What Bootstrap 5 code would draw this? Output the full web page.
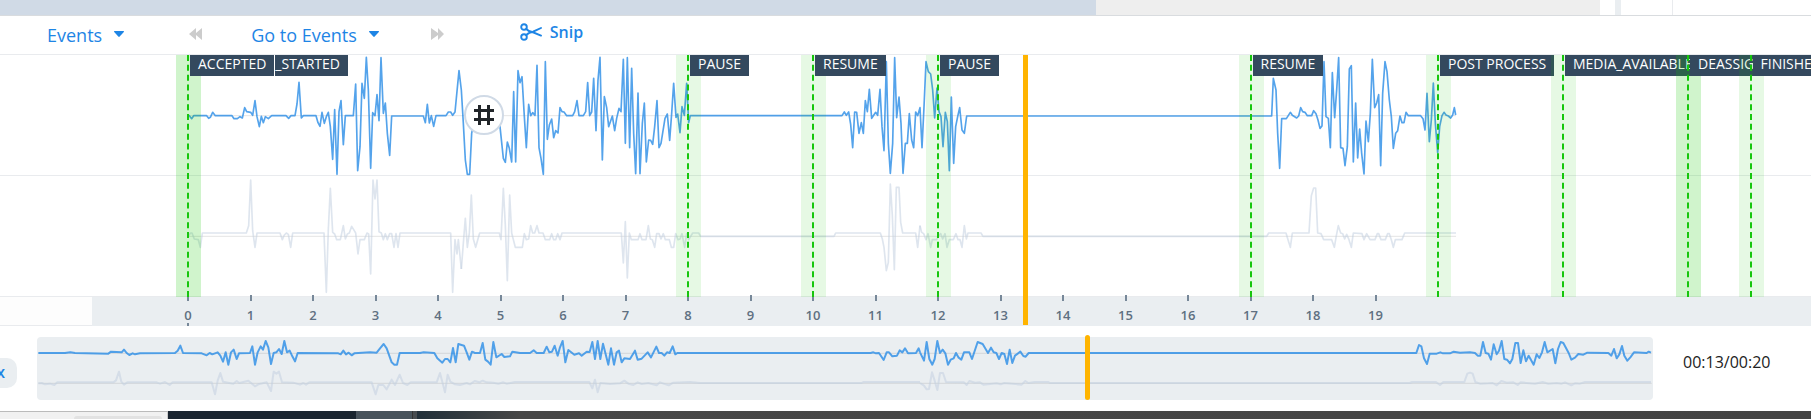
<!DOCTYPE html>
<html lang="en">
<head>
<meta charset="utf-8">
<meta name="viewport" content="width=device-width, initial-scale=1">
<title>Call timeline</title>
<link href="https://cdn.jsdelivr.net/npm/bootstrap@5.3.0/dist/css/bootstrap.min.css" rel="stylesheet">
<script src="https://cdn.jsdelivr.net/npm/bootstrap@5.3.0/dist/js/bootstrap.bundle.min.js" defer></script>
<style>
  :root { --blue: #1e85e5; --line: #e9ebee; --fill: #eaeef1; --navy: #34495e; --amber: #ffb400; }
  body { font-family: "Open Sans", "Noto Sans", sans-serif; background: #fff; overflow: hidden; }
  .load-strip { height: 16px; border-bottom: 1px solid #d9dcdf; }
  .load-strip .done { flex: 0 0 1096px; background: #d0dae6; }
  .load-strip .rest { flex: 0 1 504px; background: #eee; }
  .load-strip .grip { width: 6px; margin-left: 15px; background: var(--fill); }
  .load-strip .edge { width: 1px; margin-left: 51px; background: var(--line); }
  .tools { height: 39px; padding-left: 47px; border-bottom: 1px solid var(--line); }
  .tool { border: 0; padding: 0; background: none; color: var(--blue); font-size: 18px; line-height: 38px; white-space: nowrap; }
  .tool-caret { width: 10px; height: 6px; margin: 0 0 2px 12px; fill: var(--blue); }
  .tool-step { width: 14px; height: 12px; fill: #ccc; }
  .step-back { height: 36px; margin: 0 48px 0 65px; }
  .step-next { height: 36px; margin: 0 75px 0 52px; }
  .tool-snip { font-size: 16px; font-weight: 600; line-height: 32px; }
  .tool-snip svg { width: 22px; height: 18px; }
  .timeline { overflow: hidden; }
  .lane { height: 121px; border-bottom: 1px solid var(--line); }
  .wave { display: block; width: 1460px; height: 120px; overflow: visible; }
  .wave polyline, .mini polyline { fill: none; stroke-linejoin: round; }
  .wave polyline { stroke-width: 5; }
  .mini polyline { stroke-width: 2px; vector-effect: non-scaling-stroke; }
  .agent polyline { stroke: #2e8fe6; stroke-opacity: .82; }
  .client polyline { stroke: #c3cfe0; stroke-opacity: .55; }
  .wave polyline.axis { stroke: #999; stroke-opacity: .25; stroke-width: 3; }
  .mini polyline.axis { stroke: #999; stroke-opacity: .25; stroke-width: 1px; }
  .at { position: absolute; top: 0; left: calc(188px + var(--t) * 125px / 2); }
  .event { height: 242px; }
  .event .zone { position: absolute; top: 0; bottom: 0; left: -12px; width: 25px; background: rgba(20, 200, 0, .105); }
  .event .zone.double { background: rgba(20, 200, 0, .2); }
  .event .dash { position: absolute; top: 0; bottom: 0; left: -1px; border-left: 2px dashed #16c60c; }
  .event .tags { position: absolute; top: 0; left: 2px; }
  .tag { background: var(--navy); color: #fff; font-size: 14px; line-height: 18px; height: 21px; padding: 0 8px; white-space: nowrap; }
  .tag + .tag { border-left: 1px solid #fff; padding-left: 0; }
  .playhead { width: 5px; height: 270px; margin-left: -3px; background: var(--amber); }
  .hash { position: absolute; left: 464px; top: 40px; width: 40px; height: 40px; border: 2px solid #d0dae6; border-radius: 50%; background: #fff; padding: 0; }
  .ruler { height: 29px; background: var(--fill); color: #5f7081; font-size: 13px; font-weight: 600; }
  .ruler .head { width: 92px; height: 29px; background: #fdfdfd; border-bottom: 1px solid var(--line); }
  .tick { width: 40px; margin-left: -20px; text-align: center; line-height: 18px; padding-top: 9px; }
  .tick::before { content: ""; position: absolute; left: 19px; top: -2px; width: 2px; height: 6px; background: #778899; }
  .tick.origin::after { content: ""; position: absolute; left: 19px; top: 26px; width: 2px; height: 3px; background: #778899; }
  .bottom-bar { padding: 11px 39px 11px 0; }
  .speed { width: 17px; height: 30px; border: 0; padding: 0 12px 2px 0; border-radius: 0 10px 10px 0; background: var(--fill); color: var(--blue); font-size: 16px; font-weight: 600; direction: rtl; overflow: hidden; margin-top: 8px; }
  .overview { height: 63px; margin: 0 30px 0 20px; border-radius: 4px; background: var(--fill); min-width: 0; }
  .mini { display: block; width: 100%; height: 63px; }
  .overview-head { position: absolute; left: 65%; top: -2px; width: 5px; height: 65px; margin-left: -2px; border-radius: 3px; background: var(--amber); }
  .clock { width: 89px; font-size: 16px; line-height: 24px; color: #222; margin-top: -13px; }
  .desk { height: 8px; background: linear-gradient(90deg, #22303a 417px, #474747 520px, #444 100%); }
  .desk .tab { width: 168px; background: #f1f1f1; border-top: 1px solid #bbb; border-right: 1px solid #ccc; padding: 4px 5px 0 0; }
  .desk .pill { width: 88px; height: 3px; border-radius: 6px 6px 0 0; background: #e2e2e2; }
  .desk .dark { width: 188px; background: #1a2530; }
  .desk .slate { width: 56px; background: #48535c; }
  .desk .seam { width: 5px; background: #474c50; border-left: 1px solid #333; }
</style>
</head>
<body>
<div class="load-strip d-flex">
  <div class="done"></div><div class="rest"></div><div class="grip"></div><div class="edge"></div>
</div>

<div class="tools d-flex align-items-start">
  <button class="tool d-flex align-items-center" type="button">Events
    <svg class="tool-caret" viewBox="0 0 10 6"><path d="M.4 0h9.2q.6.3.2.9L5.7 5.6Q5 6.3 4.3 5.6L.2.9Q-.2.3.4 0z"/></svg>
  </button>
  <button class="tool step-back d-flex align-items-center" type="button" aria-label="Previous event">
    <svg class="tool-step" viewBox="0 0 14 12"><path d="M0 6 7 0v5l6-5v12L7 7v5z"/></svg>
  </button>
  <button class="tool d-flex align-items-center" type="button">Go to Events
    <svg class="tool-caret" viewBox="0 0 10 6"><path d="M.4 0h9.2q.6.3.2.9L5.7 5.6Q5 6.3 4.3 5.6L.2.9Q-.2.3.4 0z"/></svg>
  </button>
  <button class="tool step-next d-flex align-items-center" type="button" aria-label="Next event">
    <svg class="tool-step" viewBox="0 0 14 12"><path d="M13 6 7 0v5L0 0v12l7-5v5z"/></svg>
  </button>
  <button class="tool tool-snip d-flex align-items-center gap-2" type="button">
    <svg viewBox="0 0 22 18" fill="none" stroke="#1e85e5" stroke-width="1.9" stroke-linecap="round"><circle cx="4" cy="4" r="2.8"/><circle cx="4" cy="14" r="2.8"/><path d="M6.2 6Q9 9 13 9.3L21 12.6M6.2 12Q9 9 13 8.7L21 5"/></svg>
    Snip
  </button>
</div>

<main>
<section class="timeline position-relative">
  <div class="lane agent">
    <svg class="wave" viewBox="0 0 4380 360">
      <polyline class="axis" points="564,182 4368,182"/>
      <g transform="translate(0 -165)"><polyline points="564,348 568,347 575,356 581,347 620,347 626,355 631,352 638,337 646,347 696,347 702,356 712,356 720,350 727,354 734,323 740,335 752,337 758,346 765,302 771,350 778,380 784,349 790,368 796,350 805,356 815,347 858,347 866,355 873,347 885,347 891,312 897,247 904,354 910,347 948,347 954,368 960,379 966,337 973,370 979,350 985,337 991,380 998,478 1004,329 1011,523 1017,335 1023,302 1030,434 1036,347 1060,347 1067,252 1073,512 1080,440 1086,250 1093,295 1099,172 1105,270 1112,505 1118,338 1125,347 1131,284 1137,362 1143,173 1150,340 1156,309 1162,400 1169,466 1175,348 1270,348 1276,368 1282,313 1288,369 1294,347 1301,379 1308,347 1338,347 1345,336 1352,336 1358,346 1365,336 1377,212 1384,270 1390,370 1396,480 1402,523 1409,523 1415,400 1425,348 1490,348 1500,380 1510,475 1516,487 1522,426 1528,445 1535,486 1541,275 1547,486 1554,212 1560,248 1566,230 1573,350 1579,443 1586,313 1592,347 1598,338 1605,346 1611,196 1617,443 1623,475 1630,523 1636,185 1642,418 1648,375 1655,357 1661,413 1667,392 1674,399 1680,323 1686,335 1692,336 1700,347 1718,347 1724,335 1731,302 1737,347 1750,347 1757,335 1763,248 1769,347 1775,336 1781,235 1788,392 1794,240 1800,172 1807,480 1813,290 1820,323 1826,380 1837,348 1844,392 1850,355 1857,325 1863,335 1870,178 1876,430 1882,173 1889,443 1895,205 1901,400 1907,521 1914,279 1920,521 1927,370 1933,309 1939,486 1946,420 1952,421 1958,433 1964,380 1971,302 1977,443 1983,430 1995,355 2002,342 2009,421 2015,340 2021,250 2028,352 2033,342 2040,398 2046,320 2053,346 2060,250 2066,368 2071,347 2160,347"/></g>
      <g transform="translate(2160 -165)"><polyline points="0,347 366,347 373,336 379,346 386,336 392,373 398,443 404,336 410,337 417,400 424,368 430,400 436,302 442,335 448,268 455,355 461,346 467,337 473,346 480,268 486,380 492,452 499,185 505,430 511,520 518,430 524,173 530,353 537,291 543,370 549,520 556,430 562,430 568,341 575,420 581,443 587,336 593,347 600,323 606,443 612,320 618,185 625,215 632,222 638,270 644,354 651,264 657,335 663,350 669,440 676,337 682,365 688,512 694,291 701,490 707,380 713,350 719,323 726,390 733,400 740,348 1080,348"/></g>
      <g transform="translate(3240 -165)"><polyline points="0,348 575,348 580,235 588,270 593,400 599,505 605,356 619,356 631,337 637,346 650,354 656,348 662,323 668,335 675,337 682,347 695,347 701,332 708,341 714,360 720,385 726,378 732,185 738,350 745,355 751,443 757,218 764,353 770,270 776,173 782,443 789,445 795,497 802,440 808,207 814,197 820,486 827,309 833,474 839,387 845,460 852,522 858,363 865,425 871,340 877,178 884,323 890,309 896,284 902,497 908,280 915,185 921,215 928,300 934,350 940,445 947,400 953,392 960,348 966,368 972,368 978,337 985,347 1022,347 1029,356 1035,390 1041,280 1048,425 1054,360 1060,249 1066,370 1073,458 1079,380 1086,347 1092,337 1098,345 1105,348 1112,354 1118,345 1123,323 1127,345"/></g>
    </svg>
  </div>
  <div class="lane client">
    <svg class="wave" viewBox="0 0 4380 360">
      <polyline class="axis" points="564,181 4368,181"/>
      <g transform="translate(0 99)"><polyline points="564,82 572,72 576,72 583,90 595,92 601,115 607,72 739,72 746,50 752,-87 758,65 765,115 771,72 840,72 847,92 853,78 859,72 865,76 872,115 878,72 972,72 979,250 985,60 991,-62 998,70 1004,75 1010,92 1021,92 1030,50 1036,90 1042,75 1048,72 1055,52 1061,62 1067,72 1074,135 1080,92 1093,92 1101,72 1106,75 1112,195 1119,-87 1125,-30 1131,-87 1137,68 1144,72 1150,92 1156,74 1162,92 1169,74 1175,74 1182,115 1188,74 1194,115 1200,72 1352,72 1358,250 1365,92 1371,135 1375,92 1384,180"/></g>
      <g transform="translate(1380 99)"><polyline points="4,180 11,90 16,28 22,115 28,72 34,-42 40,90 47,115 59,72 118,72 123,92 130,-62 136,50 142,215 149,-42 155,72 166,115 187,115 193,74 199,92 206,90 212,50 218,72 224,72 231,50 237,72 249,72 256,92 269,92 275,74 281,92 287,92 293,74 300,92 306,72 484,72 490,162 496,38 502,207 508,72 514,92 534,92 540,74 546,92 558,92 565,50 571,90 577,92 584,115 590,74 597,74 603,90 610,74 616,92 628,92 634,115 641,115 647,74 654,92 660,90 666,74 674,115 680,74 686,92 692,82 698,72 716,72 722,82 1122,82 1127,72 1261,72 1267,90 1272,115 1279,185 1285,160 1291,-75 1297,20 1303,182 1309,-65 1317,-65 1322,40 1328,72 1367,72 1373,115 1380,50"/></g>
      <g transform="translate(2760 99)"><polyline points="0,50 5,70 11,74 18,92 24,74 32,115 37,92 50,92 56,80 62,74 68,90 75,74 81,115 88,92 100,92 108,74 114,92 120,92 126,115 133,50 139,90 144,72 183,72 189,82 1040,82 1046,72 1098,72 1104,92 1111,115 1117,72 1167,72 1174,-40 1181,-63 1187,-63 1193,72 1203,74 1211,92 1235,92 1243,115 1249,80 1255,50 1262,72 1268,74 1274,90 1280,76 1287,92 1294,115 1300,72 1326,74 1332,92 1340,74 1350,92 1365,92 1372,74 1376,74 1383,92 1396,92 1403,74 1408,74 1414,92 1420,115 1426,92 1446,92 1454,72 1608,72"/></g>
    </svg>
  </div>

  <div class="ruler position-relative">
    <div class="head"></div>
    <div class="at tick origin" style="--t:0">0</div><div class="at tick" style="--t:1">1</div>
    <div class="at tick" style="--t:2">2</div><div class="at tick" style="--t:3">3</div>
    <div class="at tick" style="--t:4">4</div><div class="at tick" style="--t:5">5</div>
    <div class="at tick" style="--t:6">6</div><div class="at tick" style="--t:7">7</div>
    <div class="at tick" style="--t:8">8</div><div class="at tick" style="--t:9">9</div>
    <div class="at tick" style="--t:10">10</div><div class="at tick" style="--t:11">11</div>
    <div class="at tick" style="--t:12">12</div><div class="at tick" style="--t:13">13</div>
    <div class="at tick" style="--t:14">14</div><div class="at tick" style="--t:15">15</div>
    <div class="at tick" style="--t:16">16</div><div class="at tick" style="--t:17">17</div>
    <div class="at tick" style="--t:18">18</div><div class="at tick" style="--t:19">19</div>
  </div>

  <div class="at event" style="--t:0"><div class="zone double"></div><div class="dash"></div><div class="tags d-flex"><div class="tag">ACCEPTED</div><div class="tag">_STARTED</div></div></div>
  <div class="at event" style="--t:8"><div class="zone"></div><div class="dash"></div><div class="tags"><div class="tag">PAUSE</div></div></div>
  <div class="at event" style="--t:10"><div class="zone"></div><div class="dash"></div><div class="tags"><div class="tag">RESUME</div></div></div>
  <div class="at event" style="--t:12"><div class="zone"></div><div class="dash"></div><div class="tags"><div class="tag">PAUSE</div></div></div>
  <div class="at event" style="--t:17"><div class="zone"></div><div class="dash"></div><div class="tags"><div class="tag">RESUME</div></div></div>
  <div class="at event" style="--t:20"><div class="zone"></div><div class="dash"></div><div class="tags"><div class="tag">POST PROCESS</div></div></div>
  <div class="at event" style="--t:22"><div class="zone"></div><div class="dash"></div><div class="tags"><div class="tag">MEDIA_AVAILABLE</div></div></div>
  <div class="at event" style="--t:24"><div class="zone double"></div><div class="dash"></div><div class="tags"><div class="tag">DEASSIGNED</div></div></div>
  <div class="at event" style="--t:25"><div class="zone"></div><div class="dash"></div><div class="tags"><div class="tag">FINISHED</div></div></div>

  <button class="hash d-flex align-items-center justify-content-center" type="button" aria-label="Tag">
    <svg width="22" height="22" viewBox="0 0 22 22" fill="none" stroke="#212529" stroke-width="3"><path d="M6.5 1v20M15.5 1v20M1 6.5h20M1 15.5h20"/></svg>
  </button>
  <div class="at playhead" style="--t:13.4"></div>
</section>

<section class="bottom-bar d-flex align-items-center">
  <button class="speed" type="button">1x</button>
  <div class="overview flex-grow-1 position-relative">
    <svg class="mini" viewBox="111 384 4848 189" preserveAspectRatio="none">
      <g class="agent"><polyline class="axis" points="115,433 4955,433"/>
      <polyline points="115,432 195,432 211,430 225,432 325,434 333,428 365,430 372,422 380,432 388,438 398,433 405,436 420,433 525,432 533,425 541,410 549,432 605,433 620,439 629,432 637,436 653,430 661,440 669,458 677,430 685,467 693,430 701,422 710,450 717,433 750,432 757,412 765,467 773,430 782,412 789,422 797,396 805,415 813,465 821,432 829,430 837,420 845,435 853,396 861,430 869,425 877,442 885,457 893,432 1015,433 1022,436 1030,425 1038,436 1046,431 1055,439 1063,433 1110,430 1130,431 1140,418 1151,405 1160,418 1175,460 1183,467 1191,467 1199,432 1260,432 1271,430 1303,432 1312,448 1327,461 1335,450 1343,450 1351,460 1359,417 1367,460 1375,405 1392,410 1400,430 1408,452 1416,428 1425,432 1440,432 1448,402 1456,452 1464,458 1472,467 1480,399 1489,445 1505,435 1513,444 1530,442 1537,428 1560,432 1590,432 1601,424 1610,432 1631,432 1640,413 1648,430 1656,428 1664,410 1673,440 1680,415 1688,396 1696,460 1705,423 1723,437 1737,433 1745,440 1760,428 1769,429 1777,399 1785,450 1793,396 1801,450 1809,404 1825,467 1833,418 1842,467 1850,430 1857,425 1865,460 1873,448 1890,450 1905,425 1913,452 1925,449 1943,430 1953,445 1969,413 1977,432 1985,432 1993,440 2001,430 2009,432 2018,412 2026,436 2032,432 2612,432 2620,430 2628,433 2637,432 2651,453 2660,430 2667,430 2677,442 2691,440 2699,424 2707,430 2715,418 2724,433 2748,432 2756,418 2760,430"/>
      <polyline transform="translate(2760 0)" points="0,430 12,455 20,399 28,450 37,467 44,450 52,396 60,432 68,422 76,433 84,467 92,452 101,448 108,432 116,446 124,452 132,430 148,430 156,450 173,399 188,405 204,432 213,416 221,430 229,432 237,450 245,432 253,435 261,465 269,422 277,462 285,440 301,428 310,441 317,443 326,432 1320,432"/>
      <polyline transform="translate(4080 0)" points="0,432 169,432 177,408 184,412 192,448 201,465 209,434 230,434 241,430 249,433 270,433 281,428 300,431 330,430 345,432 353,440 361,440 369,399 377,432 385,434 393,452 401,406 410,436 417,425 425,396 433,450 441,452 450,463 457,450 466,402 474,402 482,462 490,424 498,457 506,440 521,467 530,436 538,447 546,430 554,399 562,430 578,420 586,463 594,420 602,399 610,402 626,432 634,452 645,446 655,435 670,437 682,431 745,432 754,440 762,420 770,448 778,436 786,411 793,440 802,455 811,445 822,430 860,432 866,428 873,431"/></g>
      <g class="client"><polyline class="axis" points="115,523 4955,523"/>
      <polyline points="115,523 125,522 135,526 150,524 163,528 172,520 340,520 348,514 357,488 364,518 372,527 382,520 470,520 480,524 495,519 509,528 518,520 635,520 645,556 653,515 661,492 669,518 700,524 710,516 718,522 745,515 765,532 775,526 800,520 813,546 821,488 829,494 837,488 846,520 880,521 900,527 910,522 918,527 928,520 1115,520 1127,556 1135,528 1150,528 1160,541 1175,512 1185,528 1199,497 1209,522 1222,528 1232,520 1310,520 1320,492 1335,550 1343,497 1351,518 1365,526 1380,528 1400,522 1410,526 1424,516 1438,520 1448,515 1460,520 1480,521 1495,524 1510,520 1520,524 1545,519 1768,519 1777,538 1785,512 1793,550 1801,522 1830,525 1860,523 1873,515 1885,524 1900,528 1913,520 1925,525 1945,522 1970,529 1980,520 2006,529 2020,521 2070,519 2100,522 2585,522 2590,519 2760,519"/>
      <polyline transform="translate(2760 0)" points="0,522 12,530 20,541 27,540 36,490 44,515 52,543 60,492 69,492 78,519 132,520 140,528 148,516 165,521 180,520 190,527 230,523 242,526 253,522 305,527 316,516 325,522 345,519 385,519 390,522 1320,522"/>
      <polyline transform="translate(4080 0)" points="0,522 150,522 156,519 228,519 240,528 250,519 313,519 322,494 330,491 338,494 346,519 360,524 385,523 398,522 410,529 424,516 440,521 460,520 473,528 482,520 525,524 548,519 565,524 590,522 605,524 615,520 634,529 645,523 660,524 675,519 873,519"/></g>
    </svg>
    <div class="overview-head"></div>
  </div>
  <div class="clock">00:13/00:20</div>
</section>
</main>

<footer class="desk d-flex">
  <div class="tab d-flex justify-content-end"><div class="pill"></div></div>
  <div class="dark"></div><div class="slate"></div><div class="seam"></div>
</footer>
</body>
</html>
